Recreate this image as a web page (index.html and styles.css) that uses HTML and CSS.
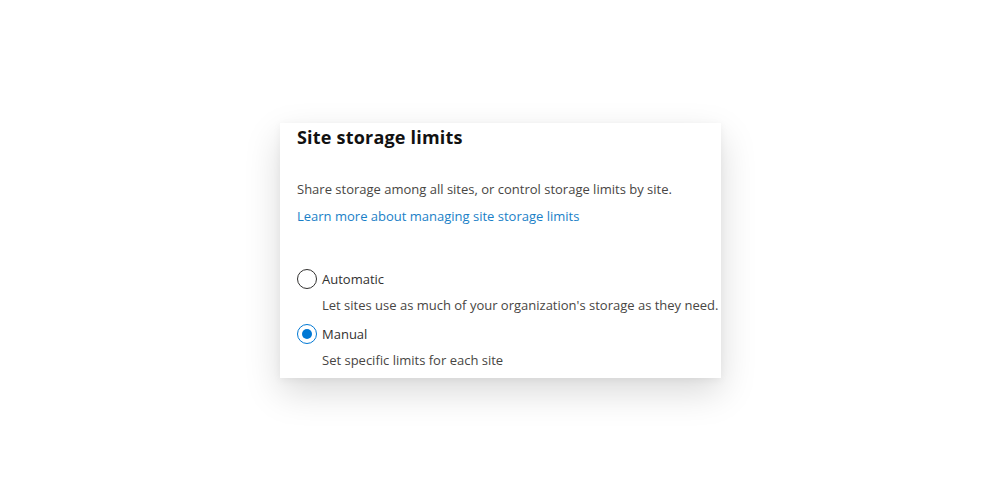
FILE: index.html
```html
<!DOCTYPE html>
<html>
<head>
<meta charset="utf-8">
<link rel="stylesheet" href="styles.css">
</head>
<body>
<div class="page">
  <div class="card">
    <h1 class="title">Site storage limits</h1>
    <p class="desc">Share storage among all sites, or control storage limits by site.</p>
    <a class="link" href="#">Learn more about managing site storage limits</a>
    <div class="options">
      <div class="option">
        <span class="radio"></span>
        <span class="label">Automatic</span>
      </div>
      <div class="option-desc">Let sites use as much of your organization's storage as they need.</div>
      <div class="option">
        <span class="radio checked"></span>
        <span class="label">Manual</span>
      </div>
      <div class="option-desc">Set specific limits for each site</div>
    </div>
  </div>
</div>
</body>
</html>
```

FILE: styles.css
```css
html, body {
  margin: 0;
  padding: 0;
  background: #ffffff;
}
body {
  font-family: "Open Sans", "Noto Sans", sans-serif;
  color: #323130;
}
.page {
  width: 1001px;
  height: 501px;
  display: flex;
  align-items: center;
  justify-content: center;
}
.card {
  width: 441px;
  height: 255px;
  box-sizing: border-box;
  padding: 2px 0 0 17px;
  background: #ffffff;
  box-shadow: 0 14px 34px rgba(0,0,0,0.15), 0 2px 8px rgba(0,0,0,0.05);
  display: flex;
  flex-direction: column;
  overflow: hidden;
}
.title {
  margin: 0;
  font-size: 18px;
  font-weight: 700;
  line-height: 24px;
  color: #111111;
  letter-spacing: 0.2px;
}
.desc {
  margin: 30px 0 0 0;
  font-size: 13px;
  line-height: 20px;
  color: #484644;
}
.link {
  margin-top: 7px;
  font-size: 13px;
  line-height: 20px;
  color: #1a7fc7;
  text-decoration: none;
}
.options {
  margin-top: 43px;
  display: flex;
  flex-direction: column;
}
.option {
  display: flex;
  align-items: center;
  gap: 5px;
  height: 20px;
}
.radio {
  width: 20px;
  height: 20px;
  box-sizing: border-box;
  border: 1px solid #323130;
  border-radius: 50%;
  display: flex;
  align-items: center;
  justify-content: center;
}
.radio.checked {
  border-color: #0078d4;
}
.radio.checked::after {
  content: "";
  width: 10px;
  height: 10px;
  border-radius: 50%;
  background: #0078d4;
}
.label {
  font-size: 13px;
  line-height: 20px;
  color: #323130;
}
.option-desc {
  margin: 6px 0 9px 25px;
  font-size: 13px;
  line-height: 20px;
  color: #484644;
  white-space: nowrap;
}
```
